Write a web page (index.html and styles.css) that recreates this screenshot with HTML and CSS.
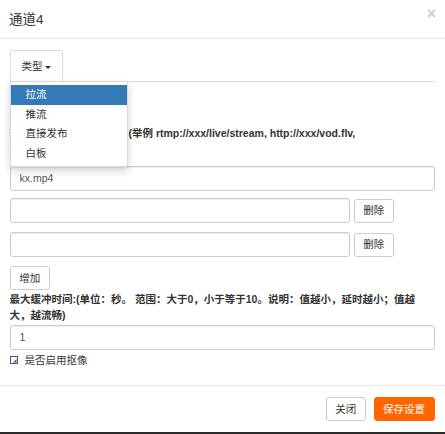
FILE: index.html
```html
<!DOCTYPE html>
<html lang="zh-CN">
<head>
<meta charset="utf-8">
<title>通道4</title>
<link rel="stylesheet" href="styles.css">
</head>
<body>
<div class="modal">
  <div class="modal-header">
    <h4 class="modal-title">通道4</h4>
    <button class="close" type="button">×</button>
  </div>
  <div class="modal-body">
    <ul class="nav-tabs">
      <li class="tab active">
        <a class="tab-link">类型<span class="caret"></span></a>
        <ul class="dropdown-menu">
          <li><a class="item selected">拉流</a></li>
          <li><a class="item">推流</a></li>
          <li><a class="item">直接发布</a></li>
          <li><a class="item">白板</a></li>
        </ul>
      </li>
    </ul>
    <div class="tab-content">
      <p class="hint">当前类型：拉流</p>
      <label class="lbl first">输入拉流地址或者文件名:(举例 rtmp://xxx/live/stream, http://xxx/vod.flv, rtsp://xxx/xxx/xxx)</label>
      <input class="fc" type="text" value="kx.mp4">
      <div class="url-row r2">
        <input class="fc short" type="text" value="">
        <button class="btn" type="button">删除</button>
      </div>
      <div class="url-row r3">
        <input class="fc short" type="text" value="">
        <button class="btn" type="button">删除</button>
      </div>
      <button class="btn add" type="button">增加</button>
      <label class="lbl second">最大缓冲时间:(单位：秒。 范围：大于0，小于等于10。说明：值越小，延时越小；值越大，越流畅)</label>
      <input class="fc" type="text" value="1">
      <label class="chk">
        <svg class="box" width="8" height="8" viewBox="0 0 8 8"><rect x="0.5" y="0.5" width="7" height="7" fill="#fff" stroke="#555"/><path d="M3 6.5 L6.5 6.5 L6.5 3 Z" fill="#2a5a9a"/></svg>
        <span>是否启用抠像</span>
      </label>
    </div>
  </div>
  <div class="modal-footer">
    <button class="btn" type="button">关闭</button>
    <button class="btn btn-save" type="button">保存设置</button>
  </div>
</div>
</body>
</html>
```

FILE: styles.css
```css
html {
  background: #2a2a2a;
}
body {
  margin: 0;
  font-family: "Liberation Sans", "Noto Sans CJK SC", sans-serif;
  font-size: 10.5px;
  color: #333;
}
.modal {
  width: 445px;
  background: #fff;
}
.modal-header {
  height: 38px;
  border-bottom: 1px solid #e5e5e5;
  display: flex;
  align-items: center;
  justify-content: space-between;
  padding: 0 9px 0 9px;
  box-sizing: content-box;
}
.modal-title {
  margin: 0;
  font-size: 13.5px;
  font-weight: normal;
  line-height: 17px;
  padding-top: 1px;
}
.close {
  border: 0;
  background: none;
  padding: 0;
  margin-top: -11px;
  font-family: "Liberation Sans", sans-serif;
  font-size: 15.75px;
  font-weight: bold;
  line-height: 1;
  color: #000;
  opacity: 0.2;
}
.modal-body {
  padding: 11px 10.5px 17px 9.5px;
}
.nav-tabs {
  list-style: none;
  margin: 0;
  padding: 0;
  display: flex;
  border-bottom: 1px solid #ddd;
  height: 31px;
}
.tab {
  position: relative;
}
.tab-link {
  display: flex;
  align-items: center;
  height: 31px;
  box-sizing: border-box;
  padding: 1px 11px 0 11px;
  border: 1px solid #ddd;
  border-bottom: 0;
  border-radius: 3px 3px 0 0;
  white-space: nowrap;
  line-height: 15px;
}
.caret {
  display: inline-block;
  width: 0;
  height: 0;
  margin-left: 2px;
  margin-top: 1px;
  border-top: 3px solid #333;
  border-left: 3px solid transparent;
  border-right: 3px solid transparent;
}
.dropdown-menu {
  position: absolute;
  top: 31px;
  left: 0;
  z-index: 10;
  list-style: none;
  margin: 0;
  padding: 3px 0;
  width: 118.5px;
  box-sizing: border-box;
  background: #fff;
  border: 1px solid rgba(0, 0, 0, 0.15);
  border-radius: 0 0 3px 3px;
  box-shadow: 0 4px 9px rgba(0, 0, 0, 0.175);
}
.item {
  display: block;
  padding: 0 15px;
  line-height: 19.5px;
  height: 19.5px;
  color: #333;
  white-space: nowrap;
}
.item.selected {
  background: #337ab7;
  color: #fff;
}
.tab-content {
  padding-top: 18px;
}
.hint {
  margin: 0 0 9px;
  line-height: 16px;
}
.lbl {
  display: block;
  font-weight: bold;
  line-height: 16px;
}
.lbl.first {
  margin-bottom: 8.5px;
}
.lbl.second {
  margin: 0.5px 0 2px;
  padding-right: 6px;
}
.fc {
  display: block;
  width: 100%;
  height: 25px;
  box-sizing: border-box;
  padding: 0 9px;
  border: 1px solid #ccc;
  border-radius: 3px;
  box-shadow: inset 0 1px 1px rgba(0, 0, 0, 0.075);
  font-family: inherit;
  font-size: 10.5px;
  color: #555;
  background: #fff;
  margin: 0;
}
.url-row {
  display: flex;
  align-items: center;
  gap: 4.5px;
}
.url-row.r2 {
  margin-top: 7.5px;
}
.url-row.r3 {
  margin-top: 9px;
}
.fc.short {
  width: 340px;
}
.btn {
  height: 24px;
  padding: 0 8px;
  border: 1px solid #ccc;
  border-radius: 3px;
  background: #fff;
  color: #333;
  font-family: inherit;
  font-size: 10.5px;
  line-height: 1;
}
.btn.add {
  display: block;
  margin-top: 8.5px;
  height: 24.5px;
  width: 40.5px;
}
.url-row .btn {
  width: 39.5px;
}
.chk {
  display: flex;
  align-items: center;
  gap: 7px;
  margin-top: 2px;
  line-height: 16px;
}
.box {
  display: block;
  margin-top: 1px;
}
.modal-footer {
  border-top: 1px solid #e5e5e5;
  display: flex;
  justify-content: flex-end;
  gap: 7.5px;
  padding: 11.5px 10.5px 11px;
}
.modal-footer .btn {
  width: 40.5px;
  padding: 0;
}
.modal-footer .btn-save {
  width: 61px;
  background: #ff6600;
  border-color: #ff6600;
  color: #fff;
}
```
